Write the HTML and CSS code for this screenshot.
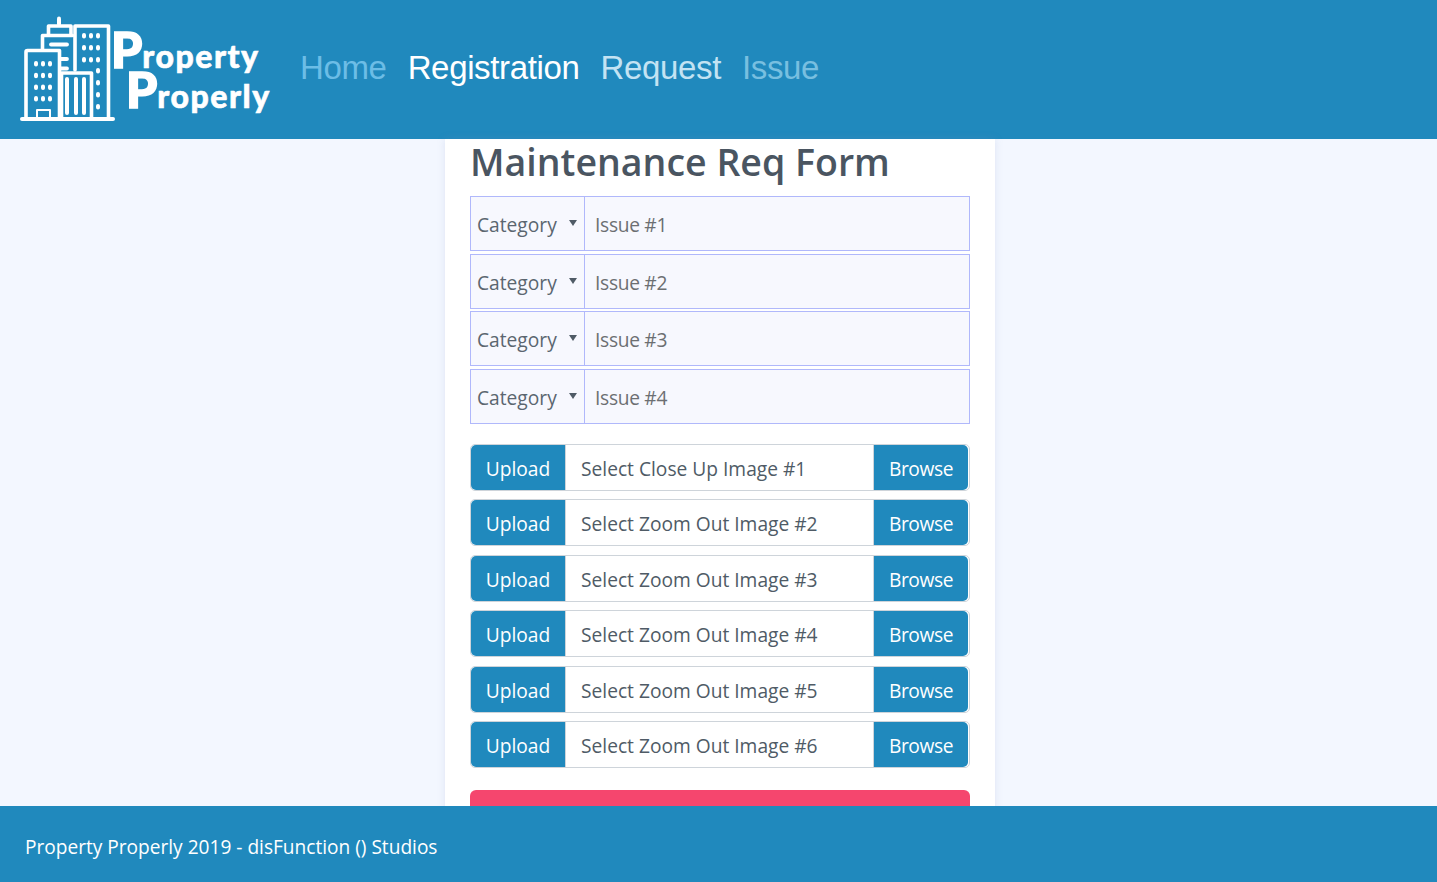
FILE: index.html
```html
<!DOCTYPE html>
<html lang="en">
<head>
<meta charset="utf-8">
<title>Maintenance Req Form</title>
<link rel="stylesheet" href="styles.css">
</head>
<body>
<header class="topbar">
  <a class="brand" href="#">
    <svg class="brand-icon" viewBox="20 14 96 106" width="96" height="106" fill="none" stroke="#fff" stroke-width="3.6" stroke-linecap="round" stroke-linejoin="round">
      <path d="M22 117H113" stroke-width="4"/>
      <path d="M26 116V50a1.500 1.500 0 0 1 1.500-1.500H59.500V116"/>
      <path d="M42.500 47V33.500H72.500"/>
      <path d="M48.500 32V24H71V33"/>
      <path d="M59 22V16.500" stroke-width="4"/>
      <path d="M51 42.500H67" stroke-width="3.800"/>
      <path d="M61 57H67M61 66.500H67" stroke-width="3.800"/>
      <path d="M75 68V24H108.500V116" />
      <path d="M61.500 116V71H91.500V116"/>
      <path d="M67 77V111M76 77V111M84 77V111" stroke-width="4"/>
      <path d="M37 116V108H50V116" stroke-width="2"/>
      <g stroke-width="4" stroke-dasharray="1.500 10.200">
        <path d="M36 61V100M43 61V100M50 61V100"/>
      </g>
      <g stroke-width="4" stroke-dasharray="1.500 10.500">
        <path d="M84 33V60M91 33V60M98 33V60"/>
      </g>
      <path d="M98 68V106" stroke-width="4" stroke-dasharray="1.500 10.500"/>
    </svg>
    <span class="wordmark">
      <span class="word"><b class="cap">P</b>roperty</span>
      <span class="word word-2"><b class="cap">P</b>roperly</span>
    </span>
  </a>
  <nav class="nav">
    <a class="nav-link home" href="#">Home</a>
    <a class="nav-link active" href="#">Registration</a>
    <a class="nav-link request" href="#">Request</a>
    <a class="nav-link issue" href="#">Issue</a>
  </nav>
</header>

<main class="page">
  <section class="card">
    <h1 class="title">Maintenance Req Form</h1>
    <div class="issues">
      <div class="issue-row"><span class="cat">Category<i class="caret"></i></span><span class="issue-input">Issue #1</span></div>
      <div class="issue-row"><span class="cat">Category<i class="caret"></i></span><span class="issue-input">Issue #2</span></div>
      <div class="issue-row"><span class="cat">Category<i class="caret"></i></span><span class="issue-input">Issue #3</span></div>
      <div class="issue-row"><span class="cat">Category<i class="caret"></i></span><span class="issue-input">Issue #4</span></div>
    </div>
    <div class="uploads">
      <div class="upload-row"><span class="btn btn-left">Upload</span><span class="file">Select Close Up Image #1</span><span class="btn btn-right">Browse</span></div>
      <div class="upload-row"><span class="btn btn-left">Upload</span><span class="file">Select Zoom Out Image #2</span><span class="btn btn-right">Browse</span></div>
      <div class="upload-row"><span class="btn btn-left">Upload</span><span class="file">Select Zoom Out Image #3</span><span class="btn btn-right">Browse</span></div>
      <div class="upload-row"><span class="btn btn-left">Upload</span><span class="file">Select Zoom Out Image #4</span><span class="btn btn-right">Browse</span></div>
      <div class="upload-row"><span class="btn btn-left">Upload</span><span class="file">Select Zoom Out Image #5</span><span class="btn btn-right">Browse</span></div>
      <div class="upload-row"><span class="btn btn-left">Upload</span><span class="file">Select Zoom Out Image #6</span><span class="btn btn-right">Browse</span></div>
    </div>
    <div class="submit"></div>
  </section>
</main>

<footer class="footer">Property Properly 2019 - disFunction () Studios</footer>
</body>
</html>
```

FILE: styles.css
```css
* { box-sizing: border-box; }
html, body { height: 100%; }
body {
  margin: 0;
  display: flex;
  flex-direction: column;
  overflow: hidden;
  background: #f3f7ff;
  font-family: "Open Sans", "Noto Sans", sans-serif;
  color: #4f5b66;
}
a { text-decoration: none; }

.topbar {
  flex: 0 0 139px;
  display: flex;
  align-items: center;
  padding-left: 20px;
  background: #2089bd;
}
.brand { display: flex; align-items: center; color: #fff; margin-bottom: 2px; }
.brand-icon { flex: none; }
.wordmark {
  display: flex;
  flex-direction: column;
  margin-left: -5px;
  margin-top: 2px;
  font-family: Lato, sans-serif;
  font-weight: 900;
  font-size: 32px;
  line-height: 39px;
  letter-spacing: 1.500px;
  width: 162px;
  -webkit-text-stroke: 0.6px #fff;
}
.word { display: block; height: 40px; white-space: nowrap; }
.word-2 { margin-left: 15px; }
.cap {
  font-size: 50px;
  font-weight: 900;
  line-height: 39px;
  letter-spacing: 0;
  -webkit-text-stroke: 1.6px #fff;
}

.nav { display: flex; gap: 21px; margin-left: 27px; margin-bottom: 4px; }
.nav-link {
  font-family: "Liberation Sans", Arial, sans-serif;
  font-size: 33px;
  letter-spacing: -0.35px;
  line-height: 40px;
}
.home { color: #6cbde6; }
.active { color: #fff; }
.request { color: #c3e3f3; }
.issue { color: #78bfe0; }

.page {
  flex: 1 1 auto;
  min-height: 0;
  display: flex;
  justify-content: center;
  padding-left: 3px;
}
.card {
  flex: 0 0 550px;
  height: 720px;
  padding: 0 25px;
  background: #fff;
  box-shadow: 0 0 8px rgba(120, 140, 190, .18);
}
.title {
  margin: 0;
  height: 57px;
  font-size: 37.500px;
  font-weight: 600;
  line-height: 46px;
  color: #4a5561;
}
.issues { display: flex; flex-direction: column; gap: 2.67px; }
.issue-row {
  display: flex;
  height: 55px;
  border: 1px solid #b0b8fb;
  background: #f7f8fe;
  font-size: 19.200px;
}
.cat {
  position: relative;
  flex: 0 0 114px;
  display: flex;
  align-items: center;
  padding: 2px 0 0 6px;
  border-right: 1px solid #b0b8fb;
  color: #5b6670;
}
.caret {
  position: absolute;
  right: 7px;
  top: 23px;
  border-left: 4px solid transparent;
  border-right: 4px solid transparent;
  border-top: 6.500px solid #4f5b66;
}
.issue-input {
  display: flex;
  align-items: center;
  padding: 2px 0 0 10px;
  color: #6c6f72;
  letter-spacing: -0.3px;
}

.uploads { display: flex; flex-direction: column; gap: 8.500px; margin-top: 20px; }
.upload-row {
  display: flex;
  height: 47px;
  border: 1px solid #ced4da;
  border-radius: 5px;
  background: #fff;
  font-size: 19.200px;
  padding: 0 1px 0 0;
}
.btn {
  display: flex;
  align-items: center;
  justify-content: center;
  flex: 0 0 94px;
  padding-top: 2px;
  background: #2089bd;
  color: #fff;
}
.btn-left { border-radius: 5px 0 0 5px; }
.btn-right { border-radius: 0 5px 5px 0; letter-spacing: -0.4px; }
.file {
  flex: 1;
  display: flex;
  align-items: center;
  padding: 2px 0 0 15px;
  border-left: 1px solid #ced4da;
  border-right: 1px solid #ced4da;
  color: #4f5b66;
}
.submit {
  height: 60px;
  margin-top: 22px;
  background: #f5466e;
  border-radius: 6px;
}

.footer {
  position: relative;
  z-index: 1;
  flex: 0 0 76px;
  display: flex;
  align-items: center;
  padding: 5px 0 0 25px;
  background: #2089bd;
  color: #fff;
  font-size: 19.100px;
}
```
